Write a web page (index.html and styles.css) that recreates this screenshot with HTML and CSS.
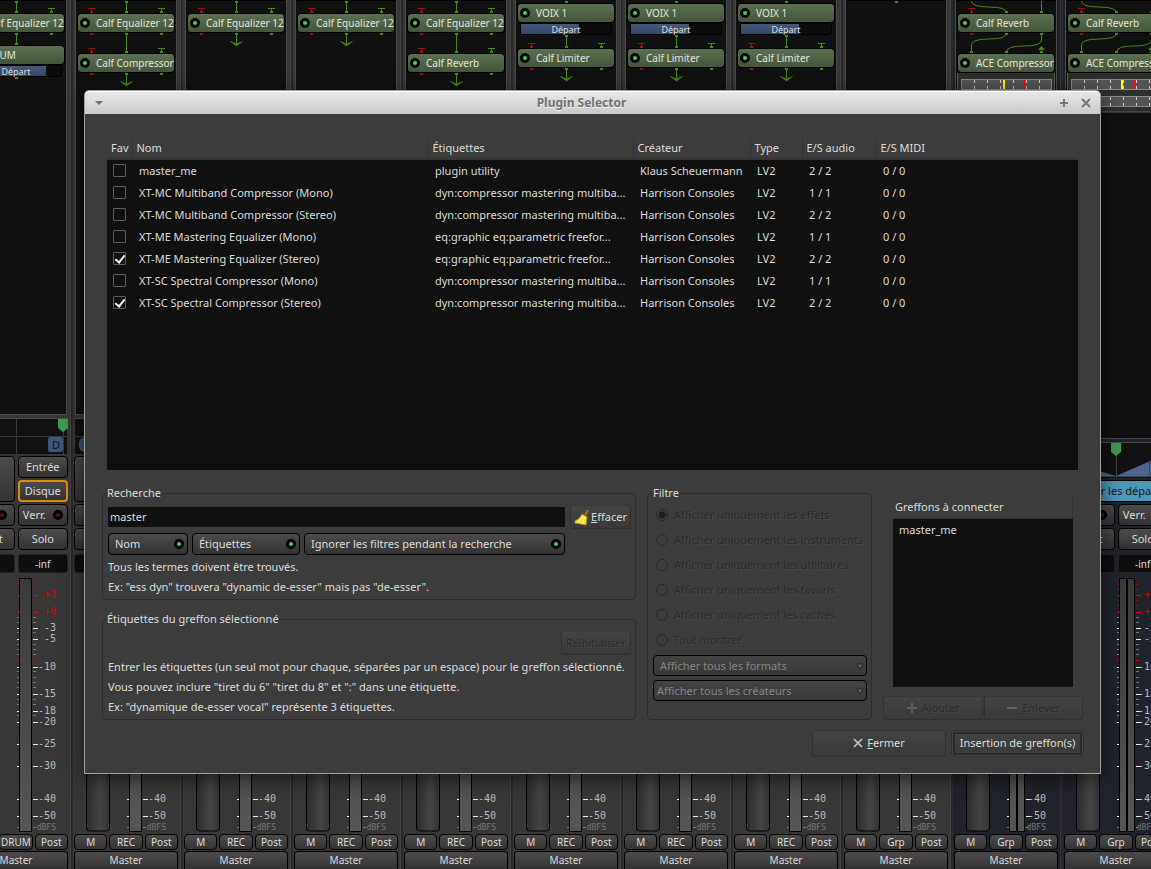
FILE: index.html
```html
<!DOCTYPE html>
<html lang="fr">
<head>
<meta charset="utf-8">
<title>Plugin Selector</title>
<link rel="stylesheet" href="styles.css">
</head>
<body>
<main class="mixer" id="mixer"></main>

<section class="dialog" role="dialog" aria-labelledby="dialog-title">
  <header class="titlebar">
    <button class="win-btn" type="button" aria-label="Menu"><svg width="10" height="6"><path d="M1 1H9L5 5Z" fill="#707070"/></svg></button>
    <h1 class="title" id="dialog-title">Plugin Selector</h1>
    <button class="win-btn" type="button" aria-label="Agrandir"><svg width="10" height="10"><path d="M5 1V9M1 5H9" stroke="#777" stroke-width="2"/></svg></button>
    <button class="win-btn" type="button" aria-label="Fermer la fenêtre"><svg width="10" height="10"><path d="M1 1L9 9M9 1L1 9" stroke="#777" stroke-width="2"/></svg></button>
  </header>

  <div class="content">
    <div class="plugin-view">
      <table class="plugins">
        <colgroup><col class="c-fav"><col class="c-name"><col class="c-tags"><col class="c-maker"><col class="c-type"><col class="c-audio"><col></colgroup>
        <thead>
          <tr><th>Fav</th><th>Nom</th><th>Étiquettes</th><th>Créateur</th><th>Type</th><th>E/S audio</th><th>E/S MIDI</th></tr>
        </thead>
        <tbody>
          <tr><td><input type="checkbox" aria-label="Favori master_me"></td><td>master_me</td><td>plugin utility</td><td>Klaus Scheuermann</td><td>LV2</td><td>2 / 2</td><td>0 / 0</td></tr>
          <tr><td><input type="checkbox" aria-label="Favori XT-MC Mono"></td><td>XT-MC Multiband Compressor (Mono)</td><td>dyn:compressor mastering multiba...</td><td>Harrison Consoles</td><td>LV2</td><td>1 / 1</td><td>0 / 0</td></tr>
          <tr><td><input type="checkbox" aria-label="Favori XT-MC Stereo"></td><td>XT-MC Multiband Compressor (Stereo)</td><td>dyn:compressor mastering multiba...</td><td>Harrison Consoles</td><td>LV2</td><td>2 / 2</td><td>0 / 0</td></tr>
          <tr><td><input type="checkbox" aria-label="Favori XT-ME Mono"></td><td>XT-ME Mastering Equalizer (Mono)</td><td>eq:graphic eq:parametric freefor...</td><td>Harrison Consoles</td><td>LV2</td><td>1 / 1</td><td>0 / 0</td></tr>
          <tr><td><input type="checkbox" checked aria-label="Favori XT-ME Stereo"></td><td>XT-ME Mastering Equalizer (Stereo)</td><td>eq:graphic eq:parametric freefor...</td><td>Harrison Consoles</td><td>LV2</td><td>2 / 2</td><td>0 / 0</td></tr>
          <tr><td><input type="checkbox" aria-label="Favori XT-SC Mono"></td><td>XT-SC Spectral Compressor (Mono)</td><td>dyn:compressor mastering multiba...</td><td>Harrison Consoles</td><td>LV2</td><td>1 / 1</td><td>0 / 0</td></tr>
          <tr><td><input type="checkbox" checked aria-label="Favori XT-SC Stereo"></td><td>XT-SC Spectral Compressor (Stereo)</td><td>dyn:compressor mastering multiba...</td><td>Harrison Consoles</td><td>LV2</td><td>2 / 2</td><td>0 / 0</td></tr>
        </tbody>
      </table>
    </div>

    <div class="panels">
      <div class="left-col">
        <fieldset class="group">
          <legend>Recherche</legend>
          <div class="search-row">
            <input class="search" type="text" value="master" aria-label="Recherche">
            <button class="btn btn-clear" type="button">
              <svg width="16" height="18" viewBox="0 0 16 18"><path d="M10 7L13 1.500L15 2.500L12 8Z" fill="#b87528" stroke="#6d400d" stroke-width=".7"/><path d="M8 6L13 9L12 17L1 15L1 13Q6 11 8 6Z" fill="#f2dc3a" stroke="#b8960c" stroke-width=".8"/><path d="M9 8L4 15M11 9L8 16M7.500 9L10 10" stroke="#fff7a8" stroke-width="1"/></svg>
              <span><u>E</u>ffacer</span>
            </button>
          </div>
          <div class="toggle-row">
            <button class="toggle t-name" type="button" aria-pressed="true">Nom<i class="led"></i></button>
            <button class="toggle t-tags" type="button" aria-pressed="true">Étiquettes<i class="led"></i></button>
            <button class="toggle t-ignore" type="button" aria-pressed="true">Ignorer les filtres pendant la recherche<i class="led"></i></button>
          </div>
          <p>Tous les termes doivent être trouvés.</p>
          <p>Ex: "ess dyn" trouvera "dynamic de-esser" mais pas "de-esser".</p>
        </fieldset>
        <fieldset class="group">
          <legend>Étiquettes du greffon sélectionné</legend>
          <div class="reset-row"><button class="btn" type="button" disabled>Réinitialiser</button></div>
          <p>Entrer les étiquettes (un seul mot pour chaque, séparées par un espace) pour le greffon sélectionné.</p>
          <p>Vous pouvez inclure "tiret du 6" "tiret du 8" et ":" dans une étiquette.</p>
          <p>Ex: "dynamique de-esser vocal" représente 3 étiquettes.</p>
        </fieldset>
      </div>

      <fieldset class="group filter">
        <legend>Filtre</legend>
        <label class="radio"><input type="radio" name="filter" checked disabled>Afficher uniquement les effets</label>
        <label class="radio"><input type="radio" name="filter" disabled>Afficher uniquement les instruments</label>
        <label class="radio"><input type="radio" name="filter" disabled>Afficher uniquement les utilitaires</label>
        <label class="radio"><input type="radio" name="filter" disabled>Afficher uniquement les favoris</label>
        <label class="radio"><input type="radio" name="filter" disabled>Afficher uniquement les cachés</label>
        <label class="radio"><input type="radio" name="filter" disabled>Tout montrer</label>
        <div class="combo combo-format"><select disabled aria-label="Formats"><option>Afficher tous les formats</option></select><svg width="8" height="7"><path d="M1 1H7L4 6Z" fill="#666" stroke="#222"/></svg></div>
        <div class="combo"><select disabled aria-label="Créateurs"><option>Afficher tous les créateurs</option></select><svg width="8" height="7"><path d="M1 1H7L4 6Z" fill="#666" stroke="#222"/></svg></div>
      </fieldset>

      <div class="right-col">
        <div class="connect">
          <h2>Greffons à connecter</h2>
          <ul><li>master_me</li></ul>
        </div>
        <div class="pair">
          <button class="btn" type="button" disabled><svg width="12" height="12"><path d="M6 1V11M1 6H11" stroke="#5c5f60" stroke-width="2"/></svg><span>A<u>j</u>outer</span></button>
          <button class="btn" type="button" disabled><svg width="12" height="12"><path d="M1 6H11" stroke="#5c5f60" stroke-width="2"/></svg><span><u>E</u>nlever</span></button>
        </div>
      </div>
    </div>

    <footer class="actions">
      <button class="btn" type="button"><svg width="10" height="10"><path d="M1 1L9 9M9 1L1 9" stroke="#c8c8c0" stroke-width="1.600"/></svg><span><u>F</u>ermer</span></button>
      <button class="btn btn-default" type="button">Insertion de greffon(s)</button>
    </footer>
  </div>
</section>
<script src="mixer.js"></script>
</body>
</html>
```
FILE: styles.css
```css
* { box-sizing: border-box; }
body {
  margin: 0;
  height: 100vh;
  overflow: hidden;
  position: relative;
  background: #333;
  color: #dcdcdc;
  font: 11px/20px "Noto Sans", "Open Sans", sans-serif;
}
button, input, select { font: inherit; color: inherit; margin: 0; }
button { padding: 0; white-space: nowrap; }
svg { display: block; flex: none; }
p, h1, h2, ul { margin: 0; padding: 0; }

/* mixer strips */
.mixer { display: flex; height: 100%; margin-left: -39px; overflow: hidden; }
.strip {
  flex: none;
  width: 110px;
  display: flex;
  flex-direction: column;
  padding: 0 2px;
  background: #373737;
  border-left: 1px solid #262626;
  border-right: 1px solid #444;
  box-shadow: inset 1px 0 #2b2b2b;
}
.strip.bus { background: #20232b; border-right-color: #34343a; }
.procs {
  flex: 1;
  min-height: 0;
  overflow: hidden;
  margin: 0 1px 3px;
  padding: 0 1px;
  background: #101010;
  border: solid #4a4a4a;
  border-width: 0 1px 1px;
}
.tail { height: 1px; background: #000; }
.proc {
  height: 20px;
  display: flex;
  align-items: center;
  gap: 6px;
  padding-left: 2px;
  white-space: nowrap;
  border: 1px solid #000;
  border-radius: 4px;
  background: linear-gradient(#5b7050, #44553b);
  color: #e4e4dc;
  font-size: 10px;
}
.led {
  flex: none;
  width: 10px;
  height: 10px;
  border: 3px solid #000;
  border-radius: 50%;
  background: #45d458;
}
.led.off { background: #5c1010; }
.send {
  height: 12px;
  margin: 0 3px;
  position: relative;
  border: 1px solid #000;
  border-radius: 3px;
  background: #0c0c0c;
  font-size: 9px;
  line-height: 11px;
  text-align: center;
}
.send .fill { position: absolute; left: 0; top: 0; bottom: 0; background: linear-gradient(#46597a, #34466a); }
.send span { position: relative; }
.pan { height: 36px; margin: 0 1px 2px; background: #111; border-top: 1px solid #4a4a4a; }
.grid { display: grid; grid-template-columns: 1fr 1fr; grid-template-rows: 22px 22px 22px 22px 21px; gap: 2px 3px; margin-bottom: 5px; }
.bus .grid { grid-template-rows: 22px 22px 22px 21px; }
.grid button {
  display: flex;
  align-items: center;
  justify-content: center;
  gap: 7px;
  overflow: hidden;
  border: 1px solid #000;
  border-radius: 4px;
  background: linear-gradient(#4c4a4b, #343233);
}
.grid .tall { grid-row: span 2; }
.grid .wide { grid-column: span 2; justify-content: flex-start; background: #4f95b5; color: #0c1a22; }
.grid .on { border: 2px solid #e08a0c; }
.peak {
  margin-top: 2px;
  border: 1px solid #222;
  border-radius: 3px;
  background: #0e0e0e;
  font-size: 10px;
  line-height: 18px;
  text-align: center;
}
.fader { height: 254px; margin-bottom: 2px; }
.fader text { font-family: "DejaVu Sans Mono", monospace; font-size: 10px; fill: #bbb; text-anchor: end; }
.fader .hot { fill: #d80000; }
.fader .unit { font-size: 8px; fill: #777; }
.foot { display: grid; grid-template-columns: 1fr 1fr 1fr; gap: 1px 2px; }
.foot button {
  height: 16px;
  border: 1px solid #000;
  border-radius: 4px;
  background: linear-gradient(#4c4a4b, #343233);
  font-size: 10px;
  line-height: 14px;
}
.foot .out { grid-column: span 3; height: 18px; border-bottom: 0; border-radius: 4px 4px 0 0; line-height: 17px; }

/* dialog window */
.dialog {
  position: absolute;
  left: 84px;
  right: 50px;
  top: 90px;
  border: 1px solid #a0a0a0;
  border-radius: 5px 5px 0 0;
  background: #3c3c3c;
  box-shadow: 0 4px 20px rgba(0, 0, 0, .6);
}
.titlebar {
  display: flex;
  align-items: center;
  gap: 12px;
  height: 23px;
  padding: 0 9px;
  border-top: 1px solid #fff;
  border-radius: 4px 4px 0 0;
  background: linear-gradient(#e8e8e8, #cacaca);
}
.win-btn { border: 0; background: none; }
.title { flex: 1; text-align: center; font-size: 12px; line-height: 22px; font-weight: bold; color: #727272; text-shadow: 0 1px #f4f4f4; }
.content { padding: 24px 16px 16px; }

.plugin-view { height: 332px; margin: 0 6px 13px; background: linear-gradient(#3c3c3c 21px, #101010 21px); }
.plugins { width: 100%; table-layout: fixed; border-collapse: collapse; white-space: nowrap; }
.c-fav { width: 25px; }
.c-name { width: 296px; }
.c-tags { width: 205px; }
.c-maker { width: 117px; }
.c-type { width: 52px; }
.c-audio { width: 74px; }
.plugins th { height: 22px; padding: 0 0 2px 4px; text-align: left; font-weight: normal; background: linear-gradient(#3c3c3c, #3c3c3c 18px, #333); border-left: 1px solid #333; }
.plugins th:first-child { border-left: 0; }
.plugins td { height: 22px; padding: 0 0 0 7px; overflow: hidden; }
.plugins td:first-child { padding: 0 0 2px 6px; }
.plugins input {
  appearance: none;
  display: block;
  width: 13px;
  height: 13px;
  border: 1px solid #5c5c5c;
  border-radius: 1px;
  background: #101010;
}
.plugins input:checked::after {
  content: "";
  display: block;
  width: 4px;
  height: 8px;
  margin-left: 3px;
  border: solid #f4f4f4;
  border-width: 0 2px 2px 0;
  transform: rotate(38deg);
}

.panels { display: grid; grid-template-columns: 1fr 225px 200px; gap: 11px; margin: 0 1px; }
.left-col { display: flex; flex-direction: column; gap: 9px; }
.group { min-width: 0; margin: 0; padding: 2px 4px; border: 1px solid #2c2c2c; border-radius: 4px; }
.group legend { padding: 0; height: 20px; }
.group p { white-space: nowrap; padding-left: 1px; }
.search-row { display: flex; align-items: center; gap: 5px; height: 24px; padding-left: 1px; margin-bottom: 4px; }
.search { flex: 1; min-width: 0; height: 20px; padding: 0 2px; border: 0; background: #101010; }
.btn {
  display: flex;
  align-items: center;
  justify-content: center;
  gap: 4px;
  height: 24px;
  padding: 0 4px;
  border: 1px solid #303030;
  border-top-color: #383838;
  border-radius: 3px;
  background: linear-gradient(#434343, #393939);
}
.btn:disabled, .radio { color: #2b2b2b; text-shadow: 1px 1px #484848; }
.btn-clear { width: 61px; padding: 0 2px; gap: 1px; }
.toggle-row { display: flex; gap: 4px; height: 22px; margin: 0 66px 2px 1px; }
.toggle {
  display: flex;
  align-items: center;
  justify-content: space-between;
  padding: 0 3px 0 6px;
  border: 1px solid #000;
  border-radius: 4px;
  background: linear-gradient(#4c4a4b, #343233);
}
.t-name { width: 80px; }
.t-tags { width: 108px; }
.t-ignore { flex: 1; }
.reset-row { display: flex; justify-content: flex-end; margin-bottom: 2px; }
.filter { padding: 0 4px 0 5px; }
.radio { display: flex; align-items: center; gap: 6px; height: 25px; padding: 0 0 2px 3px; white-space: nowrap; }
.radio input { appearance: none; flex: none; width: 12px; height: 12px; border: 1px solid #292929; border-radius: 50%; }
.radio input:checked { background: radial-gradient(#1e1e1e 3px, transparent 4px); }
.combo { position: relative; margin-top: 2px; height: 21px; }
.combo + .combo { margin-top: 4px; }
.combo select { appearance: none; display: block; width: 100%; height: 21px; padding: 0 3px; border: 1px solid #000; border-radius: 4px; background: linear-gradient(#434343, #393939); color: #858585; opacity: 1; }
.combo-format select { padding-left: 6px; }
.combo svg { position: absolute; right: 3px; top: 8px; }
.right-col { display: flex; flex-direction: column; justify-content: space-between; padding-top: 13px; }
.connect { margin: 0 10px; }
.connect h2 { height: 23px; padding-left: 2px; font-size: 11px; line-height: 22px; font-weight: normal; border-right: 1px solid #333; border-bottom: 1px solid #333; }
.connect ul { height: 168px; padding: 1px 6px; list-style: none; background: #101010; }
.pair { display: grid; grid-template-columns: 1fr 1fr; gap: 1px; }
.actions { display: grid; grid-template-columns: 134px 133px; gap: 5px; justify-content: end; margin-top: 10px; }
.actions .btn { height: 27px; padding-bottom: 2px; }
.btn-default { border: 1px solid #303030; box-shadow: inset 0 0 0 1px #424242, inset 0 0 0 3px #2a2a2a; }
```
FILE: mixer.js
```js
const GREEN = '#448a14', RED = '#a01010';

/* Wires between two processors: T-shaped loose ends and plain stubs */
const wire = (h, body) => `<svg width="98" height="${h}">${body}</svg>`;
const line = (x, y1, y2, c) => `<path d="M${x + .5} ${y1}V${y2}" stroke="${c}"/>`;
const stub = (x, y, c) => `<rect x="${x - 1}" y="${y}" width="3" height="2" fill="${c}"/>`;
const tee = (x, h, c) => `<path d="M${x - 3} ${h - 4.5}H${x + 4}" stroke="${c}"/>` + line(x, h - 4, h - 2, c) + stub(x, h - 2, c);
const ends = (h, below) => tee(14, h, RED) + tee(84, h, GREEN) + (below ? stub(14, 0, RED) + stub(84, 0, GREEN) : '');
const gap = (h, below) => wire(h, line(49, 0, h, GREEN) + stub(49, 0, GREEN) + stub(49, h - 2, GREEN) + ends(h, below));
const arrow = wire(15, line(49, 0, 12, GREEN) + `<path d="M43.5 8.500L49.500 13L55.500 8.500L49.500 11Z" fill="${GREEN}" stroke="${GREEN}" stroke-width=".6"/>` +
  stub(49, 0, GREEN) + stub(14, 0, RED) + stub(84, 0, GREEN));
const curve = d => `<path d="${d}" fill="none" stroke="${GREEN}"/>`;
const busTop = wire(12, curve('M14.5 0Q14.500 6 32 6Q49.500 6 49.500 12') + line(84, 0, 12, GREEN) + tee(14, 12, RED) + stub(49, 10, GREEN) + stub(84, 10, GREEN));
const busMid = wire(20, stub(14, 0, RED) + stub(49, 0, GREEN) + stub(84, 0, GREEN) +
  curve('M49.500 0Q49.500 6 32 6Q14.500 6 14.500 12V20') + curve('M84.500 0V7Q84.500 13 67 13Q49.500 13 49.500 19') +
  stub(14, 18, GREEN) + stub(49, 18, GREEN) + `<path d="M81 17L84.500 13L88 17Z" fill="${GREEN}"/>` + stub(84, 18, GREEN));

const proc = n => `<div class="proc"><i class="led"></i>${n}</div>`;
const send = w => `<div class="send"><div class="fill" style="width:${w}px"></div><span>Départ</span></div>`;
const tail = '<div class="tail"></div>';
const gauge = (y, yellow, red) => {
  let s = `<rect x="4.500" y="${y + .5}" width="90" height="10" fill="#555" stroke="#888"/>`;
  for (let x = 17; x < 94; x += 13) s += `<path d="M${x}.5 ${y + 1}V${y + 4}M${x}.5 ${y + 7}V${y + 10}" stroke="#ccc"/>`;
  if (yellow) s += `<rect x="${yellow}" y="${y + 1}" width="2" height="9" fill="#ff0"/><rect x="${red}" y="${y + 1}" width="2" height="9" fill="#e11"/>`;
  return s;
};
const display = (yl, rd) => `<svg width="98" height="40"><rect x=".5" y="-4" width="97" height="43" rx="4" fill="#2e2e2e" stroke="#53654a"/>${gauge(6, yl, rd)}${gauge(23)}</svg>`;

const eq = tail + gap(12) + proc('Calf Equalizer 12');
const voix = wire(3, stub(49, 1, GREEN)) + proc('VOIX 1') + send(58) + gap(13) + proc('Calf Limiter') + arrow;
const bus = (yl, rd) => tail + busTop + proc('Calf Reverb') + busMid + proc('ACE Compressor') + display(yl, rd);
/* "open" strips show their labels over the full height */
const strips = [
  { p: eq + wire(12, line(49, 0, 12, GREEN) + stub(49, 0, GREEN) + stub(49, 10, GREEN) + stub(84, 0, GREEN)) + proc('DRUM') + send(75) + wire(3, stub(49, 0, GREEN)), g: 'DRUM', pan: 102, open: true },
  { p: eq + gap(20, true) + proc('Calf Compressor') + arrow, g: 'REC' },
  { p: eq + arrow, g: 'REC' },
  { p: eq + arrow, g: 'REC' },
  { p: eq + gap(20, true) + proc('Calf Reverb') + arrow, g: 'REC' },
  { p: voix, g: 'REC' },
  { p: voix, g: 'REC' },
  { p: voix, g: 'REC' },
  { p: tail + wire(3, stub(49, 0, GREEN)), g: 'Grp' },
  { p: bus(46, 66), g: 'Grp', bus: true },
  { p: bus(54, 67), g: 'Grp', bus: true, open: true }
];

const marks = [['+3', 16], ['+0', 33], ['-3', 49], ['-5', 60], ['-10', 88], ['-15', 115], ['-18', 132], ['-20', 143], ['-25', 165], ['-30', 187], ['-40', 220], ['-50', 237]];
const minor = [6, 11, 22, 27, 39, 44, 54, 66, 71, 76, 93, 99, 104, 109, 121, 126, 137];
function fader(isBus, open) {
  const end = isBus ? 72 : 69;
  let s = '<defs><linearGradient id="m" x2="0" y2="1"><stop stop-color="#3a3a3a"/><stop offset="1" stop-color="#565656"/></linearGradient><linearGradient id="f"><stop stop-color="#2c2c2c"/><stop offset=".6" stop-color="#444"/><stop offset="1" stop-color="#333"/></linearGradient></defs>';
  s += '<rect x="12.500" y="-4" width="23" height="257" rx="3" fill="url(#f)" stroke="#000"/>';
  const tick = (y, c, w) => `<path d="M53 ${y}.5H56M${end} ${y}.5H${end + w}" stroke="${c}"/>`;
  for (const y of minor) s += tick(y, y < 30 ? '#8a1414' : '#777', 3);
  s += tick(82, '#d80000', 3) + tick(249, '#777', 3);
  for (const [t, y] of marks) {
    s += tick(y + 1, t[0] === '+' ? '#e00' : '#eee', 5);
    if (open || y > 200) s += `<text x="92" y="${y + 4}"${t[0] === '+' ? ' class="hot"' : ''}>${t}</text>`;
  }
  s += '<text class="unit" x="92" y="252">dBFS</text>';
  const bar = (x, w) => `<rect x="${x}.5" y=".5" width="${w}" height="253" fill="url(#m)" stroke="#000"/>`;
  s += isBus ? bar(55, 7) + bar(63, 7) : bar(55, 12);
  return `<svg class="fader" width="106" height="254">${s}</svg>`;
}
function pan(x, isBus, open) {
  const c = 51;
  const k = x === undefined ? c : x - 4;
  const mark = `<path d="M${k - 5} 0H${k + 5}V9L${k} 13L${k - 5} 9Z" fill="#3d9a50"/>`;
  if (isBus) return `<svg width="104" height="35"><path d="M0 18L51 33L90 16H104V33H0Z" fill="#4a6690"/><path d="M0 33.500H104M51.500 0V35M84.500 18V33" stroke="#444"/>${mark}</svg>`;
  return `<svg width="104" height="35"><path d="M0 17.500H104M${c}.5 0V35M98.500 0V35" stroke="#3a3a3a"/>
    <rect x="4" y="18" width="16" height="15" rx="6" fill="#3d567c"/><rect x="83" y="18" width="15" height="15" rx="2" fill="#3d567c"/>
    ${open ? '<text x="87" y="30" fill="#0d1420">D</text>' : ''}${mark}</svg>`;
}
const off = '<i class="led off"></i>';
document.getElementById('mixer').innerHTML = strips.map(s => {
  const t = n => s.open ? n : '';
  return `
  <div class="strip${s.bus ? ' bus' : ''}">
    <div class="procs">${s.p}</div>
    <div class="pan">${pan(s.pan, s.bus, s.open)}</div>
    <div class="grid">
      ${s.bus ? `<button class="wide" type="button">${t('Afficher les départs')}</button>`
        : `<button class="tall" type="button">${off}</button><button type="button">${t('Entrée')}</button><button class="on" type="button">${t('Disque')}</button>`}
      <button type="button">${t('Iso.')} ${off}</button><button type="button">${t('Verr.')} ${off}</button>
      <button type="button">${t('Muet')}</button><button type="button">${t('Solo')}</button>
      <div class="peak"></div><div class="peak">${t('-inf')}</div>
    </div>
    ${fader(s.bus, s.open)}
    <div class="foot"><button type="button">M</button><button type="button">${s.g}</button><button type="button">Post</button><button class="out" type="button">Master</button></div>
  </div>`;
}).join('');
```
